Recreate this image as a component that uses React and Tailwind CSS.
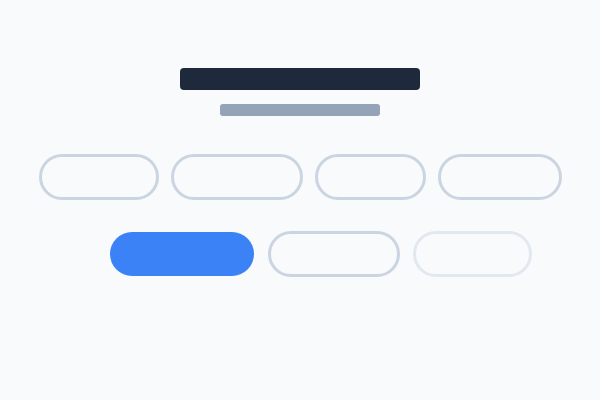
import React from 'react';

// Skeleton pills: widths taken from the layout
const TOP_ROW = [
    { w: 'w-[120px]', tone: 'border-[#cbd5e1]' },
    { w: 'w-[132px]', tone: 'border-[#cbd5e1]' },
    { w: 'w-[111px]', tone: 'border-[#cbd5e1]' },
    { w: 'w-[124px]', tone: 'border-[#cbd5e1]' },
];

function Pill({ w, tone }) {
    return <div className={`${w} h-[46px] rounded-full border-[3px] ${tone} bg-[#f8fafc]`} />;
}

export default function App() {
    return (
        <div className="w-[600px] h-[400px] bg-[#f8fafc] flex flex-col items-center pt-[68px]" style={{ fontFamily: '"Liberation Sans", sans-serif' }}>
            <div className="w-[240px] h-[22px] rounded-[4px] bg-[#1e293b]" />
            <div className="w-[160px] h-[12px] rounded-[3px] bg-[#94a3b8] mt-[14px]" />

            <div className="flex items-center gap-[12px] mt-[38px]">
                {TOP_ROW.map((p, i) => (
                    <Pill key={i} {...p} />
                ))}
            </div>

            <div className="flex items-center mt-[31px] pl-[42px]">
                <div className="w-[144px] h-[44px] rounded-full bg-[#3b82f6]" />
                <div className="ml-[14px]">
                    <Pill w="w-[132px]" tone="border-[#cbd5e1]" />
                </div>
                <div className="ml-[13px]">
                    <Pill w="w-[119px]" tone="border-[#e2e8f0]" />
                </div>
            </div>
        </div>
    );
}
